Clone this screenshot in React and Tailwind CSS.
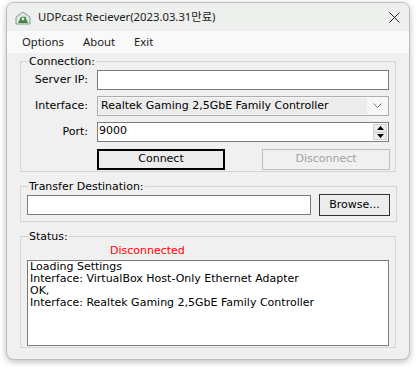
import React from 'react';

const UI = { fontFamily: '"DejaVu Sans", "Noto Sans CJK KR", sans-serif' };
const SEGOE = { fontFamily: '"Noto Sans", "Noto Sans CJK KR", sans-serif' };

const LOG = [
  'Loading Settings',
  'Interface: VirtualBox Host-Only Ethernet Adapter',
  'OK,',
  'Interface: Realtek Gaming 2,5GbE Family Controller',
];

function AppIcon() {
  return (
    <svg width="16" height="14" viewBox="0 0 16 14">
      <path d="M1 6 L8 1 L15 6 L15 13 L1 13 Z" fill="#dfe6e6" stroke="#8a9a9a" strokeWidth="1" />
      <path d="M3 12 L6 6 L8 9 L10 5 L13 12 Z" fill="#3f8a3a" />
      <circle cx="8" cy="8" r="2" fill="#e8f0e0" stroke="#2f6a2a" strokeWidth="0.8" />
    </svg>
  );
}

function Group({ label, children, className = '' }) {
  return (
    <fieldset className={`border border-[#d5d5d5] ${className}`}>
      <legend className="ml-[7px] px-[1px] text-[11px] leading-[13px] text-black" style={UI}>
        {label}
      </legend>
      {children}
    </fieldset>
  );
}

function Row({ label, children }) {
  return (
    <div className="flex items-center">
      <div className="w-[67px] text-right text-[11px] text-black" style={UI}>{label}</div>
      <div className="ml-[9px] w-[292px]">{children}</div>
    </div>
  );
}

export default function App() {
  return (
    <div className="w-[416px] h-[367px] bg-white pt-[2px] pl-[6px] overflow-hidden">
      <div className="w-[404px] h-[358px] rounded-[8px] border border-[#bdbdbd] bg-[#f0f0f0] shadow-[0_2px_6px_rgba(0,0,0,0.25)] flex flex-col overflow-hidden">
        {/* title bar */}
        <div className="h-[28px] bg-[#eef0ee] flex items-center">
          <div className="ml-[8px] mt-[1px]"><AppIcon /></div>
          <div className="ml-[7px] text-[11.3px] text-[#1a1a1a]" style={SEGOE}>UDPcast Reciever(2023.03.31만료)</div>
          <div className="ml-auto mr-[9px]">
            <svg width="11" height="11" viewBox="0 0 11 11">
              <path d="M0.5 0.5 L10.5 10.5 M10.5 0.5 L0.5 10.5" stroke="#222" strokeWidth="1" />
            </svg>
          </div>
        </div>

        {/* menu */}
        <div className="h-[22px] bg-[#f9f9f9] flex items-center text-[11.3px] text-[#1a1a1a]" style={SEGOE}>
          <span className="ml-[15px]">Options</span>
          <span className="ml-[19px]">About</span>
          <span className="ml-[19px]">Exit</span>
        </div>

        {/* client */}
        <div className="flex-1 px-[13px] pt-[2px] flex flex-col">
          <Group label="Connection:" className="h-[117px] pt-[2px]">
            <div className="flex flex-col gap-[6px]">
              <Row label="Server IP:">
                <div className="h-[20px] bg-white border border-[#7a7a7a]" />
              </Row>
              <Row label="Interface:">
                <div className="h-[20px] bg-[#f7f7f7] border border-[#acacac] flex items-center p-[1px]">
                  <div className="flex-1 h-full bg-[#ececec] pl-[2px] text-[11px] leading-[16px] text-black" style={UI}>
                    Realtek Gaming 2,5GbE Family Controller
                  </div>
                  <div className="w-[20px] flex justify-center">
                    <svg width="9" height="6" viewBox="0 0 9 6">
                      <path d="M0.5 0.5 L4.5 4.5 L8.5 0.5" fill="none" stroke="#707070" strokeWidth="1" />
                    </svg>
                  </div>
                </div>
              </Row>
              <Row label="Port:">
                <div className="h-[20px] bg-white border border-[#7a7a7a] flex">
                  <div className="flex-1 pl-[1px] text-[11px] leading-[16px] text-black" style={UI}>9000</div>
                  <div className="w-[14px] my-[1px] mr-[1px] flex flex-col border border-[#cfcfcf] bg-[#ececec]">
                    <div className="flex-1 flex items-center justify-center border-b border-[#cfcfcf]">
                      <svg width="7" height="4" viewBox="0 0 7 4"><path d="M3.5 0 L7 4 L0 4 Z" fill="#000" /></svg>
                    </div>
                    <div className="flex-1 flex items-center justify-center">
                      <svg width="7" height="4" viewBox="0 0 7 4"><path d="M0 0 L7 0 L3.5 4 Z" fill="#000" /></svg>
                    </div>
                  </div>
                </div>
              </Row>
              <div className="flex mt-[1px] ml-[76px]">
                <div className="w-[128px] h-[21px] border-2 border-black bg-[#ececec] flex items-center justify-center text-[11px] text-black" style={UI}>
                  Connect
                </div>
                <div className="ml-[37px] w-[128px] h-[21px] border border-[#bfbfbf] flex items-center justify-center text-[11px] text-[#a0a0a0]" style={UI}>
                  Disconnect
                </div>
              </div>
            </div>
          </Group>

          <Group label="Transfer Destination:" className="mt-[8px] h-[42px]">
            <div className="flex items-center px-[6px] pt-[1px]">
              <div className="w-[284px] h-[20px] bg-white border border-[#7a7a7a]" />
              <div className="ml-[8px] w-[71px] h-[22px] border border-[#333] bg-[#ececec] flex items-center justify-center text-[11px] text-black" style={UI}>
                Browse...
              </div>
            </div>
          </Group>

          <Group label="Status:" className="mt-[8px] h-[118px]">
            <div className="px-[6px]">
              <div className="ml-[83px] h-[15px] text-[11px] leading-[15px] text-[#ff0000]" style={UI}>Disconnected</div>
              <div className="mt-[2px] h-[86px] bg-white border border-[#7a7a7a] pl-[2px] text-[11px] leading-[12px] text-black" style={UI}>
                {LOG.map((l, i) => <div key={i}>{l}</div>)}
              </div>
            </div>
          </Group>
        </div>
      </div>
    </div>
  );
}
